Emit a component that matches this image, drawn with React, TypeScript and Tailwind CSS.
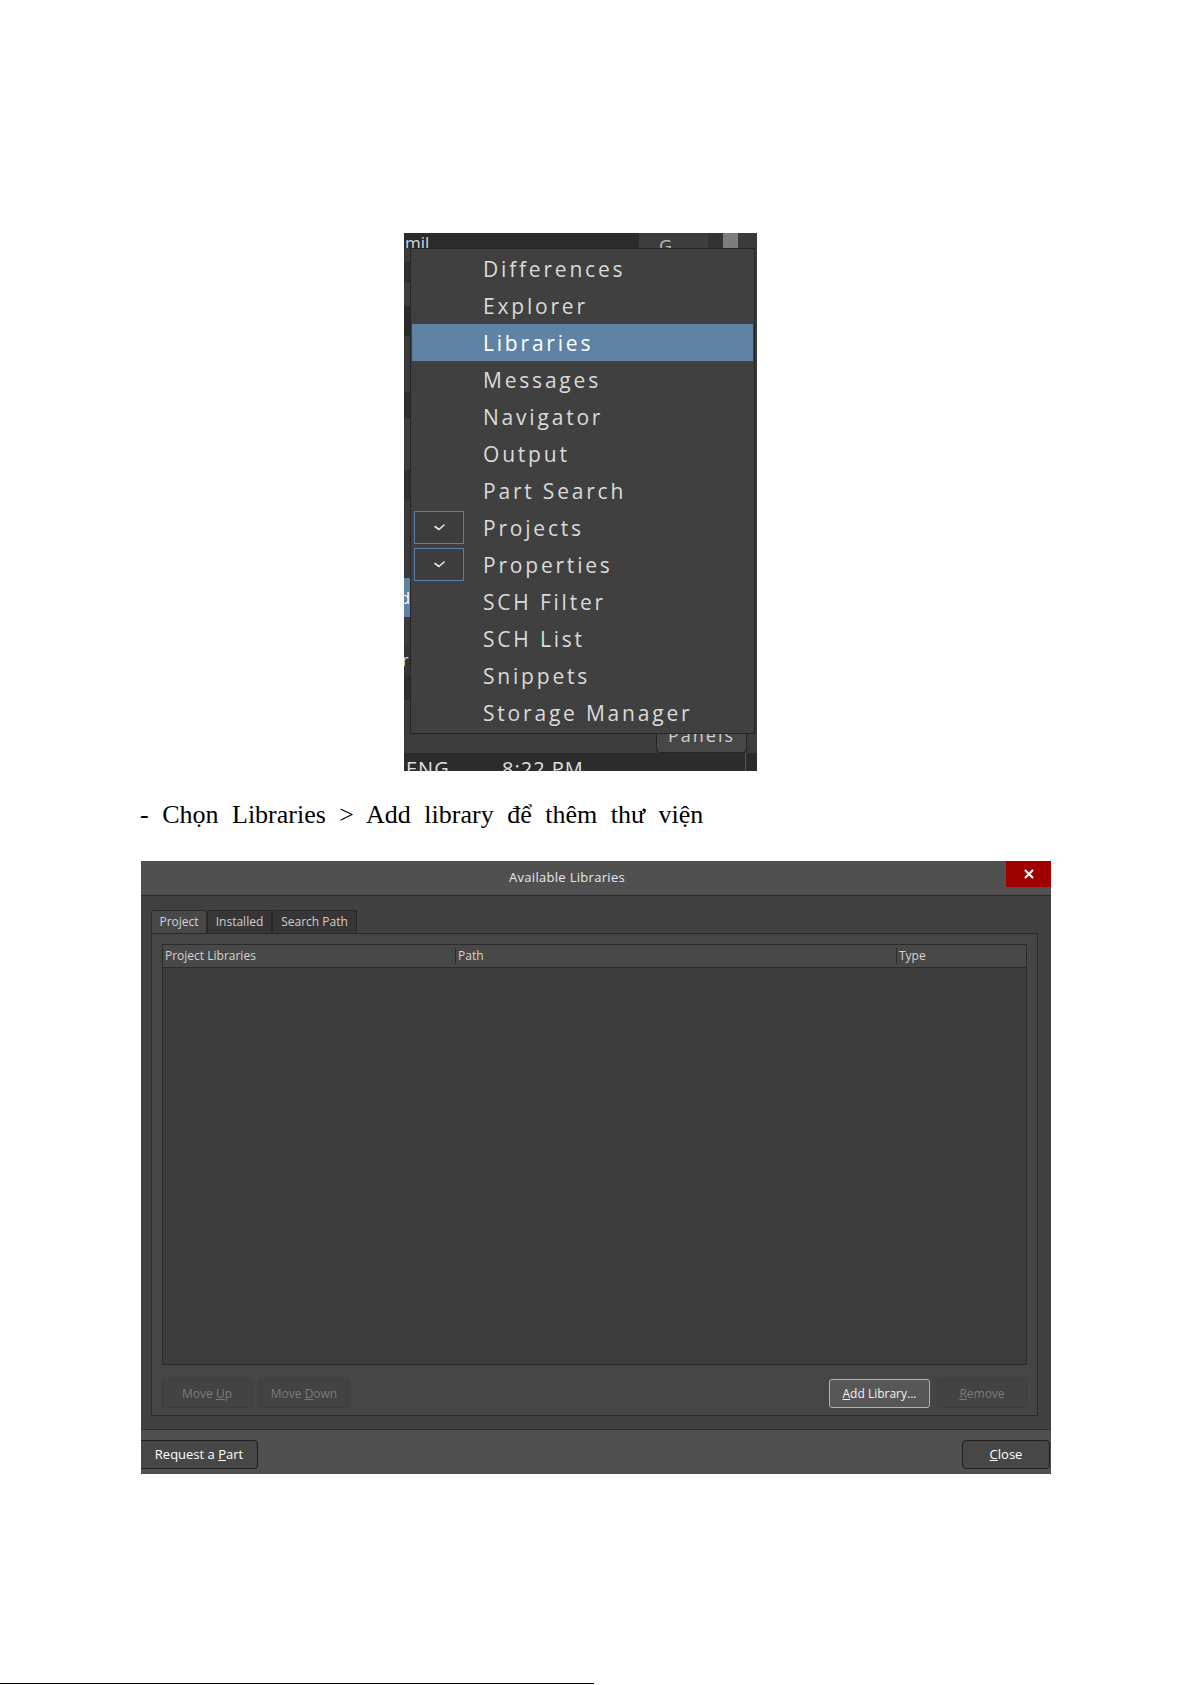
import { X } from 'lucide-react';

const ITEMS = [
  'Differences',
  'Explorer',
  'Libraries',
  'Messages',
  'Navigator',
  'Output',
  'Part Search',
  'Projects',
  'Properties',
  'SCH Filter',
  'SCH List',
  'Snippets',
  'Storage Manager',
];

const CHECKED = ['Projects', 'Properties'];
const ACTIVE = 'Libraries';

function Check() {
  return (
    <svg width="11" height="7" viewBox="0 0 11 7" fill="none">
      <polyline points="1,2.5 5,5.5 10,1" stroke="#e6e6e6" strokeWidth="1.6" strokeLinecap="round" strokeLinejoin="round" />
    </svg>
  );
}

function PanelsMenu() {
  return (
    <div className="ml-[404px] flex h-[538px] w-[353px] flex-col overflow-hidden bg-[#383838] font-['Open_Sans',sans-serif]">
      {/* top strip of the captured window */}
      <div className="flex h-[15px] shrink-0">
        <div className="w-[235px] overflow-hidden bg-[#2b2b2b] pl-[1px] pt-[1px] text-[17px] leading-[17px] text-[#d8d8d8]">mil</div>
        <div className="w-[69px] overflow-hidden bg-[#3d3d3d] pl-[20px] pt-[4px] text-[18px] leading-[18px] text-[#bdbdbd]">G</div>
        <div className="w-[15px] bg-[#333333]" />
        <div className="w-[15px] bg-[#7d7d7d]" />
        <div className="flex-1 bg-[#3a3a3a]" />
      </div>

      <div className="flex h-[486px] shrink-0">
        {/* sliver of the window behind the popup */}
        <div className="flex w-[6px] shrink-0 flex-col overflow-hidden text-[16px] leading-none text-[#dddddd]">
          <div className="h-[14px] bg-[#3a3a3a]" />
          <div className="h-[20px] bg-[#2f2f2f]" />
          <div className="h-[24px] bg-[#3d3d3d]" />
          <div className="h-[30px] bg-[#2b2b2b]" />
          <div className="h-[56px] bg-[#3b3b3b]" />
          <div className="h-[26px] bg-[#2e2e2e]" />
          <div className="h-[52px] bg-[#3c3c3c]" />
          <div className="h-[30px] bg-[#303030]" />
          <div className="h-[78px] bg-[#3a3a3a]" />
          <div className="flex h-[39px] items-center justify-end bg-[#5f83a5] text-white">d</div>
          <div className="h-[28px] bg-[#3a3a3a]" />
          <div className="flex h-[30px] items-center bg-[#353535] -ml-[2px]">r</div>
          <div className="h-[25px] bg-[#2d2d2d]" />
          <div className="h-[34px] bg-[#3b3b3b]" />
        </div>

        {/* the popup */}
        <div className="w-[345px] shrink-0 border border-[#262626] bg-[#404040] p-px pb-[2px]">
          {ITEMS.map((item) => {
            const isActive = item === ACTIVE;
            const isChecked = CHECKED.includes(item);
            return (
              <div key={item} className={`flex h-[37px] items-center ${isActive ? 'bg-[#6083a5] text-white' : 'text-[#dadada]'}`}>
                <div className="flex w-[71px] shrink-0 pl-[2px]">
                  {isChecked && (
                    <div className="flex h-[33px] w-[50px] items-center justify-center border border-[#5a80a8] bg-[#3d3d3d]">
                      <Check />
                    </div>
                  )}
                </div>
                <span className="pt-[2px] text-[21px] leading-none tracking-[2.8px]">{item}</span>
              </div>
            );
          })}
        </div>
        <div className="flex-1 bg-[#3a3a3a]" />
      </div>

      {/* bottom strip */}
      <div className="flex h-[19px] shrink-0 bg-[#3c3c3c]">
        <div className="ml-[252px] w-[91px] overflow-hidden rounded-b-[4px] border border-t-0 border-[#262626] bg-[#474747] text-center">
          <div className="-mt-[9px] text-[18px] leading-[20px] tracking-[2px] text-[#d0d0d0]">Panels</div>
        </div>
      </div>
      <div className="flex h-[18px] shrink-0 overflow-hidden bg-[#2c2c2c] text-[20px] leading-[20px] tracking-[1px] text-[#e0e0e0]">
        <div className="w-[98px] pl-[2px] pt-[6px]">ENG</div>
        <div className="w-[243px] pt-[6px]">8:22 PM</div>
        <div className="w-px bg-[#555555]" />
      </div>
    </div>
  );
}

function Btn({
  children,
  width,
  variant,
}: {
  children: React.ReactNode;
  width: string;
  variant: 'disabled' | 'primary';
}) {
  return (
    <div
      className={`flex h-[29px] items-center justify-center rounded-[3px] border ${width} ${
        variant === 'primary'
          ? 'border-[#8cbbe8] bg-[#575757] text-[#f2f2f2]'
          : 'border-[#3d3d3d] bg-[#434343] text-[#7b7b7b]'
      }`}
    >
      {children}
    </div>
  );
}

function LibrariesDialog() {
  return (
    <div className="ml-[141px] mt-[31px] flex h-[613px] w-[910px] flex-col font-['Open_Sans',sans-serif] text-[12px]">
      {/* title bar */}
      <div className="flex h-[35px] shrink-0 border-b border-[#2b2b2b] bg-[#505050]">
        <div className="flex flex-1 items-center justify-center pr-[13px] text-[13px] tracking-[0.3px] text-[#e8e8e8]">
          Available Libraries
        </div>
        <div className="flex h-[26px] w-[45px] items-center justify-center bg-[#a00000]">
          <X className="h-[14px] w-[14px] text-white" strokeWidth={3.5} />
        </div>
      </div>

      {/* body */}
      <div className="flex flex-1 flex-col bg-[#414141] pb-[13px] pl-[10px] pr-[13px] pt-[14px]">
        <div className="flex h-[23px] shrink-0">
          <div className="flex w-[56px] items-center justify-center rounded-t-[3px] border border-b-0 border-[#2b2b2b] bg-[#484848] text-[#d4d4d4]">Project</div>
          <div className="flex w-[65px] items-center justify-center rounded-t-[3px] border border-b-0 border-[#262626] bg-[#363636] text-[#d0d0d0]">Installed</div>
          <div className="flex w-[85px] items-center justify-center rounded-t-[3px] border border-b-0 border-[#262626] bg-[#363636] text-[#d0d0d0]">Search Path</div>
        </div>

        <div className="flex flex-1 flex-col border border-[#2b2b2b] bg-[#454545] px-[10px] pb-[7px] pt-[10px]">
          <div className="flex flex-1 flex-col border border-[#2b2b2b] bg-[#3c3c3c]">
            <div className="flex h-[23px] shrink-0 border-b border-[#2b2b2b] bg-[#484848] text-[#d4d4d4]">
              <div className="flex w-[292px] items-center pl-[2px]">Project Libraries</div>
              <div className="my-[3px] w-px bg-[#2b2b2b]" />
              <div className="flex w-[440px] items-center pl-[2px]">Path</div>
              <div className="my-[3px] w-px bg-[#2b2b2b]" />
              <div className="flex flex-1 items-center pl-[2px]">Type</div>
            </div>
          </div>

          <div className="mt-[14px] flex h-[29px] shrink-0 gap-[7px]">
            <Btn width="w-[90px]" variant="disabled">
              <span>Move <u>U</u>p</span>
            </Btn>
            <Btn width="w-[90px]" variant="disabled">
              <span>Move <u>D</u>own</span>
            </Btn>
            <div className="flex-1" />
            <Btn width="w-[101px]" variant="primary">
              <span><u>A</u>dd Library...</span>
            </Btn>
            <Btn width="w-[90px]" variant="disabled">
              <span><u>R</u>emove</span>
            </Btn>
          </div>
        </div>
      </div>

      {/* footer bar */}
      <div className="flex h-[45px] shrink-0 justify-between border-t border-[#2b2b2b] bg-[#505050] pt-[10px]">
        <div className="flex h-[29px] w-[117px] items-center justify-center rounded-r-[4px] border border-l-0 border-[#1f1f1f] bg-[#474747] text-[13px] text-white">
          <span>Request a <u>P</u>art</span>
        </div>
        <div className="mr-px flex h-[29px] w-[88px] items-center justify-center rounded-[4px] border border-[#1f1f1f] bg-[#474747] text-[13px] text-white">
          <span><u>C</u>lose</span>
        </div>
      </div>
    </div>
  );
}

export default function App() {
  return (
    <div className="flex h-[1685px] w-[1191px] flex-col overflow-hidden bg-white pt-[233px]">
      <PanelsMenu />

      <p className="ml-[140px] mt-[29px] font-['Liberation_Serif',serif] text-[26px] leading-[30px] text-black [word-spacing:7px]">
        - Chọn Libraries &gt; Add library để thêm thư viện
      </p>

      <LibrariesDialog />

      <div className="mb-px mt-auto h-px w-[594px] bg-black" />
    </div>
  );
}
